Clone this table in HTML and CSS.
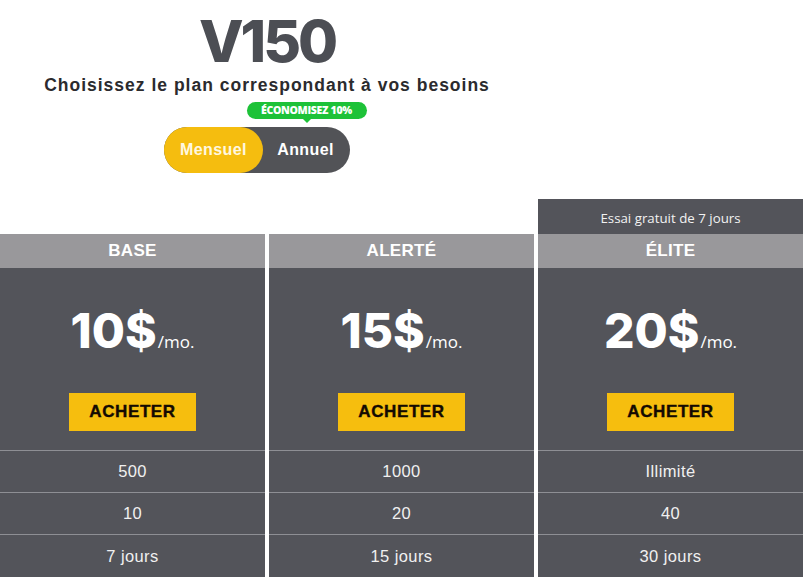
FILE: index.html
```html
<!DOCTYPE html>
<html lang="fr">
<head>
<meta charset="utf-8">
<title>V150 - Plans</title>
<link rel="stylesheet" href="styles.css">
</head>
<body>
<header class="top">
  <h1 class="title">V150</h1>
  <p class="subtitle">Choisissez le plan correspondant à vos besoins</p>
  <div class="switch-wrap">
    <div class="switch">
      <span class="opt opt-on">Mensuel</span>
      <span class="opt opt-off">Annuel
        <span class="badge">ÉCONOMISEZ 10%</span>
      </span>
    </div>
  </div>
</header>
<main class="plans">
  <section class="plan">
    <div class="spacer"></div>
    <div class="plan-head">BASE</div>
    <div class="plan-body">
      <div class="price"><span class="amount">10$</span><span class="per">/mo.</span></div>
      <a class="buy" href="#">ACHETER</a>
    </div>
    <div class="row">500</div>
    <div class="row">10</div>
    <div class="row">7 jours</div>
  </section>
  <section class="plan">
    <div class="spacer"></div>
    <div class="plan-head">ALERTÉ</div>
    <div class="plan-body">
      <div class="price"><span class="amount">15$</span><span class="per">/mo.</span></div>
      <a class="buy" href="#">ACHETER</a>
    </div>
    <div class="row">1000</div>
    <div class="row">20</div>
    <div class="row">15 jours</div>
  </section>
  <section class="plan">
    <div class="trial">Essai gratuit de 7 jours</div>
    <div class="plan-head">ÉLITE</div>
    <div class="plan-body">
      <div class="price"><span class="amount">20$</span><span class="per">/mo.</span></div>
      <a class="buy" href="#">ACHETER</a>
    </div>
    <div class="row">Illimité</div>
    <div class="row">40</div>
    <div class="row">30 jours</div>
  </section>
</main>
</body>
</html>
```
FILE: styles.css
```css
* { box-sizing: border-box; }
html, body { margin: 0; padding: 0; background: #ffffff; }
body { width: 804px; height: 578px; overflow: hidden; font-family: "Liberation Sans", Arial, sans-serif; }

.top {
  width: 534px;
  display: flex;
  flex-direction: column;
  align-items: center;
  padding-top: 12px;
}
.title {
  margin: 0;
  font-family: Inter, "Liberation Sans", sans-serif;
  font-weight: 800;
  font-size: 58px;
  line-height: 58px;
  letter-spacing: -3px;
  color: #4c4e54;
}
.subtitle {
  margin: 5px 0 0;
  font-weight: 700;
  font-size: 17.5px;
  line-height: 20px;
  letter-spacing: 1px;
  color: #2b2b2e;
}
.switch-wrap {
  align-self: flex-start;
  padding-left: 164px;
  margin-top: 32px;
}
.switch {
  display: flex;
  width: 186px;
  height: 46px;
  border-radius: 23px;
  background: #525357;
}
.opt {
  display: flex;
  align-items: center;
  justify-content: center;
  height: 46px;
  font-weight: 700;
  font-size: 16px;
  letter-spacing: 0.4px;
  color: #ffffff;
}
.opt-on {
  width: 99px;
  border-radius: 23px;
  background: #f5bd0f;
  color: #fff8e0;
}
.opt-off {
  flex: 1;
  position: relative;
  padding-right: 2px;
}
.badge {
  position: absolute;
  left: 50%;
  top: -25px;
  transform: translateX(-50%);
  width: 120px;
  height: 17px;
  border-radius: 9px;
  background: #1dc238;
  color: #ffffff;
  font-family: "Open Sans", sans-serif;
  font-weight: 800;
  font-size: 10.5px;
  line-height: 17px;
  text-align: center;
  letter-spacing: -0.3px;
}
.badge::after {
  content: "";
  position: absolute;
  left: 50%;
  bottom: -4px;
  margin-left: -4px;
  border-left: 4px solid transparent;
  border-right: 4px solid transparent;
  border-top: 4px solid #1dc238;
}

.plans {
  display: grid;
  grid-template-columns: 265px 265px 265px;
  column-gap: 4px;
  margin-top: 26px;
}
.plan { display: flex; flex-direction: column; }
.spacer { height: 35px; }
.trial {
  height: 35px;
  background: #53545a;
  color: #f2f2f2;
  font-family: "Open Sans", sans-serif;
  font-size: 13.3px;
  display: flex;
  align-items: center;
  justify-content: center;
  padding-top: 2px;
}
.plan-head {
  height: 34px;
  background: #99989b;
  color: #ffffff;
  font-weight: 700;
  font-size: 17px;
  display: flex;
  align-items: center;
  justify-content: center;
  letter-spacing: 0.3px;
}
.plan-body {
  height: 183px;
  background: #53545a;
  display: flex;
  flex-direction: column;
  align-items: center;
  padding-top: 37px;
  border-bottom: 1px solid #8e8f94;
}
.price {
  display: flex;
  align-items: baseline;
  color: #ffffff;
  height: 52px;
}
.amount {
  font-family: Inter, "Liberation Sans", sans-serif;
  font-weight: 800;
  font-size: 48px;
  line-height: 52px;
  letter-spacing: 0;
}
.per {
  font-family: "Open Sans", sans-serif;
  font-size: 17px;
  margin-left: 1px;
}
.buy {
  margin-top: 36px;
  width: 127px;
  height: 38px;
  background: #f6be0e;
  color: #140a02;
  text-decoration: none;
  font-weight: 700;
  font-size: 17px;
  letter-spacing: 0.6px;
  -webkit-text-stroke: 0.4px #140a02;
  display: flex;
  align-items: center;
  justify-content: center;
}
.row {
  height: 42px;
  background: #53545a;
  color: #f0f0f0;
  font-family: "Liberation Sans", sans-serif;
  font-size: 16.5px;
  letter-spacing: 0.4px;
  display: flex;
  align-items: center;
  justify-content: center;
  border-bottom: 1px solid #8e8f94;
}
.row:last-child { border-bottom: none; }
```
